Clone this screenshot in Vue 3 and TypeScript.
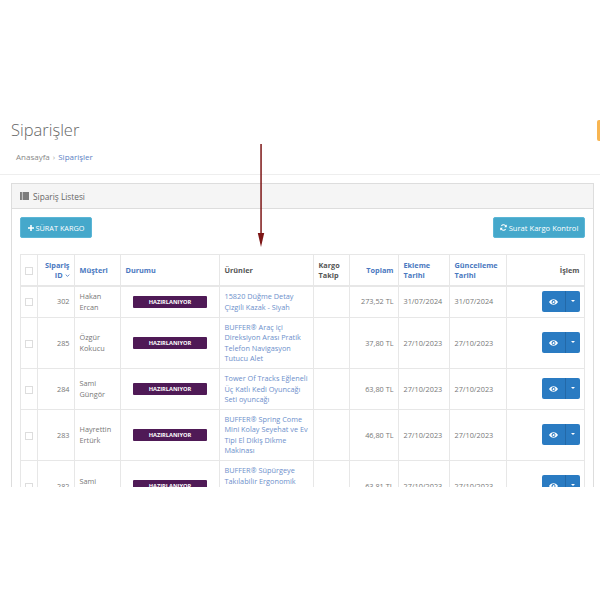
<script setup lang="ts">
interface Order {
  id: number
  customer: string[]
  products: string[]
  total: string
  created: string
  updated: string
}

const orders: Order[] = [
  { id: 302, customer: ['Hakan', 'Ercan'], products: ['15820 Düğme Detay', 'Çizgili Kazak - Siyah'], total: '273,52 TL', created: '31/07/2024', updated: '31/07/2024' },
  { id: 285, customer: ['Özgür', 'Kokucu'], products: ['BUFFER® Araç içi', 'Direksiyon Arası Pratik', 'Telefon Navigasyon', 'Tutucu Alet'], total: '37,80 TL', created: '27/10/2023', updated: '27/10/2023' },
  { id: 284, customer: ['Sami', 'Güngör'], products: ['Tower Of Tracks Eğleneli', 'Üç Katlı Kedi Oyuncağı', 'Seti oyuncağı'], total: '63,80 TL', created: '27/10/2023', updated: '27/10/2023' },
  { id: 283, customer: ['Hayrettin', 'Ertürk'], products: ['BUFFER® Spring Come', 'Mini Kolay Seyehat ve Ev', 'Tipi El Dikiş Dikme', 'Makinası'], total: '46,80 TL', created: '27/10/2023', updated: '27/10/2023' },
  { id: 282, customer: ['Sami', 'Güngör'], products: ['BUFFER® Süpürgeye', 'Takılabilir Ergonomik', '\u00a0', '\u00a0'], total: '63,81 TL', created: '27/10/2023', updated: '27/10/2023' },
]
</script>

<template>
  <div class="page">
    <header class="head">
      <h1 class="title">Siparişler</h1>
      <nav class="crumbs">
        <span>Anasayfa</span>
        <span class="sep">›</span>
        <a class="link">Siparişler</a>
      </nav>
    </header>

    <section class="portlet">
      <div class="portlet-head">
        <svg class="list-icon" viewBox="0 0 14 12" width="9" height="8">
          <path fill="#555" d="M0 0h3v2.4H0zM4 0h10v2.4H4zM0 3.2h3v2.4H0zM4 3.2h10v2.4H4zM0 6.4h3v2.4H0zM4 6.4h10v2.4H4zM0 9.6h3V12H0zM4 9.6h10V12H4z" />
        </svg>
        <span>Sipariş Listesi</span>
      </div>
      <div class="portlet-body">
        <div class="actions">
          <button class="btn-info btn-left">
            <svg viewBox="0 0 10 10" width="6" height="6"><path fill="#fff" d="M3.7 0h2.6v3.7H10v2.6H6.3V10H3.7V6.3H0V3.7h3.7z" /></svg>
            SÜRAT KARGO
          </button>
          <button class="btn-info btn-right">
            <svg viewBox="0 0 12 12" width="7" height="7">
              <path fill="none" stroke="#fff" stroke-width="1.8" d="M10.2 4.6A4.4 4.4 0 0 0 2.4 3.2M1.8 7.4a4.4 4.4 0 0 0 7.8 1.4" />
              <path fill="#fff" d="M11.6 1v4.4H7.2zM.4 11V6.6h4.4z" />
            </svg>
            Surat Kargo Kontrol
          </button>
        </div>

        <table class="grid">
          <colgroup>
            <col style="width: 17px" /><col style="width: 37px" /><col style="width: 46px" /><col style="width: 99px" /><col style="width: 94px" />
            <col style="width: 36px" /><col style="width: 49px" /><col style="width: 51px" /><col style="width: 57px" /><col style="width: 78px" />
          </colgroup>
          <thead>
            <tr>
              <th><span class="check"></span></th>
              <th class="right link">Sipariş<br />ID <svg class="chev" viewBox="0 0 8 5" width="5" height="3"><path fill="none" stroke="#4a78c0" stroke-width="1.400" d="M1 1l3 3 3-3" /></svg></th>
              <th class="link">Müşteri</th>
              <th class="link">Durumu</th>
              <th>Ürünler</th>
              <th>Kargo<br />Takip</th>
              <th class="right link">Toplam</th>
              <th class="link">Ekleme<br />Tarihi</th>
              <th class="link">Güncelleme<br />Tarihi</th>
              <th class="right">İşlem</th>
            </tr>
          </thead>
          <tbody>
            <tr v-for="o in orders" :key="o.id">
              <td><span class="check"></span></td>
              <td class="right">{{ o.id }}</td>
              <td><span v-for="c in o.customer" :key="c" class="line">{{ c }}</span></td>
              <td class="center"><span class="badge">HAZIRLANIYOR</span></td>
              <td class="link"><span v-for="(p, i) in o.products" :key="i" class="line">{{ p }}</span></td>
              <td></td>
              <td class="right">{{ o.total }}</td>
              <td>{{ o.created }}</td>
              <td>{{ o.updated }}</td>
              <td class="right">
                <span class="split">
                  <span class="split-main">
                    <svg viewBox="0 0 16 10" width="9" height="6">
                      <path fill="#fff" fill-rule="evenodd" d="M8 0c3.6 0 6.4 2.4 8 5-1.6 2.6-4.4 5-8 5S1.600 7.600 0 5c1.600-2.600 4.400-5 8-5zm0 1.500a3.500 3.500 0 1 0 0 7 3.500 3.500 0 0 0 0-7zM8 3a2 2 0 1 1-2 2c0-.4.600-.2 1-.6S7.400 3 8 3z" />
                    </svg>
                  </span>
                  <span class="split-caret"></span>
                </span>
              </td>
            </tr>
          </tbody>
        </table>
      </div>
    </section>

    <div class="tab"></div>
    <div class="fade"></div>
    <svg class="arrow" viewBox="0 0 8 104" width="8" height="104">
      <path fill="#7d1616" d="M3.300 0h1.500v92H3.300z" />
      <path fill="#7d1616" d="M.8 89h6.400L4 103z" />
    </svg>
  </div>
</template>

<style>
html, body { margin: 0; background: #fff; }
</style>

<style scoped>
.page {
  position: relative;
  width: 600px;
  height: 487px;
  overflow: hidden;
  box-sizing: border-box;
  padding-top: 119px;
  font-family: "Open Sans", "Liberation Sans", sans-serif;
  font-size: 7.3px;
  color: #777;
  background: #fff;
}
.head {
  height: 55px;
  padding-left: 11px;
  border-bottom: 1px solid #eee;
}
.title {
  margin: 0;
  font-size: 16.500px;
  line-height: 22px;
  font-weight: 300;
  color: #666;
}
.crumbs {
  display: flex;
  gap: 3px;
  margin: 10px 0 0 5px;
  font-size: 8px;
  line-height: 12px;
  color: #888;
}
.sep { color: #aaa; }
.link { color: #5b82c4; }
.portlet {
  margin: 8px 6px 0 11px;
  border: 1px solid #ddd;
}
.portlet-head {
  display: flex;
  align-items: center;
  gap: 4px;
  height: 24px;
  padding-left: 8px;
  background: #f5f5f5;
  border-bottom: 1px solid #ddd;
  font-size: 8.300px;
  color: #666;
}
.portlet-body { padding: 8px 8px 0; }
.actions {
  display: flex;
  justify-content: space-between;
  margin-bottom: 16px;
}
.btn-info {
  display: flex;
  align-items: center;
  justify-content: center;
  gap: 2px;
  height: 21px;
  padding: 0;
  border: 1px solid #5bb6d6;
  border-radius: 2px;
  background: #45a8cb;
  color: #fff;
  font: 400 7.300px "Open Sans", "Liberation Sans", sans-serif;
}
.btn-left { width: 72px; }
.btn-right { width: 92px; font-size: 7.600px; }
.grid {
  width: 565px;
  table-layout: fixed;
  border-collapse: collapse;
  line-height: 10.300px;
}
.grid th, .grid td {
  border: 1px solid #e7e7e7;
  padding: 4.500px 4.500px;
  vertical-align: middle;
  text-align: left;
}
.grid th {
  border-bottom: 2px solid #e7e7e7;
  font-weight: 700;
  color: #555;
}
.grid th.link { color: #4a78c0; }
.grid td.link { color: #6d8fcb; }
.grid .right { text-align: right; }
.grid .center { text-align: center; }
.grid th:first-child, .grid td:first-child { padding: 0; text-align: center; }
.line { display: block; white-space: nowrap; }
.chev { vertical-align: middle; }
.check {
  display: inline-block;
  width: 6px;
  height: 6px;
  border: 1px solid #ddd;
  vertical-align: middle;
}
.badge {
  display: inline-block;
  width: 74px;
  height: 12px;
  line-height: 12px;
  border-radius: 1px;
  background: #4f1a56;
  color: #fff;
  font-size: 5.700px;
  font-weight: 700;
  text-align: center;
}
.split {
  display: inline-flex;
  vertical-align: middle;
  height: 21px;
  border-radius: 2px;
  overflow: hidden;
  background: #2a7bc2;
}
.split-main {
  display: flex;
  align-items: center;
  justify-content: center;
  width: 23px;
  border-right: 1px solid #2369a8;
}
.split-caret {
  position: relative;
  width: 14px;
}
.split-caret::after {
  content: "";
  position: absolute;
  left: 5px;
  top: 9px;
  border: 2px solid transparent;
  border-top: 2.500px solid #fff;
  border-bottom: 0;
}
.tab {
  position: absolute;
  right: 0;
  top: 120px;
  width: 3px;
  height: 21px;
  border-radius: 2px 0 0 2px;
  background: #f8b551;
}
.fade {
  position: absolute;
  left: 150px;
  right: 30px;
  bottom: 0;
  height: 24px;
  background: radial-gradient(ellipse closest-side at 50% 100%, rgba(0, 0, 0, 0.07), rgba(0, 0, 0, 0));
  background-size: 100% 200%;
  background-position: 0 0;
  pointer-events: none;
}
.arrow {
  position: absolute;
  left: 256.500px;
  top: 144px;
}
</style>
